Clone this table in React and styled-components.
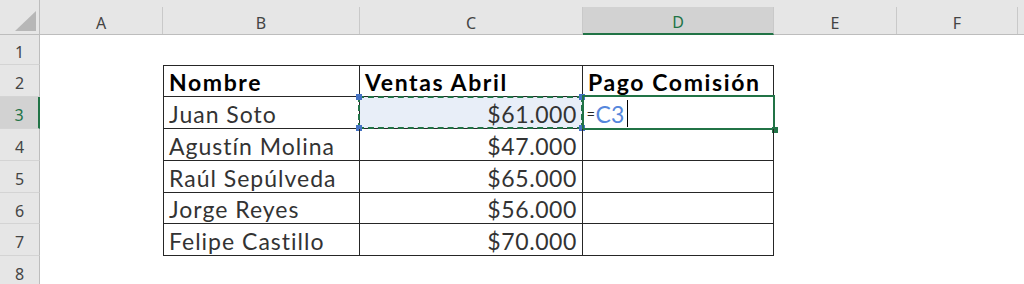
import React from 'react';
import styled, { createGlobalStyle, css } from 'styled-components';

const GlobalStyle = createGlobalStyle`
  html, body {
    margin: 0;
    padding: 0;
    background: #ffffff;
  }
  body {
    overflow: hidden;
  }
`;

const COLS = ['A', 'B', 'C', 'D', 'E', 'F'];
const WIDTHS = [123, 197, 223, 191, 123, 121];
const ROW_HEIGHTS = [30, 32, 32, 32, 32, 31, 32, 32, 32];

const data = [
  ['Juan Soto', '$61.000'],
  ['Agustín Molina', '$47.000'],
  ['Raúl Sepúlveda', '$65.000'],
  ['Jorge Reyes', '$56.000'],
  ['Felipe Castillo', '$70.000'],
];

const Sheet = styled.div`
  width: 1024px;
  height: 284px;
  overflow: hidden;
  display: grid;
  grid-template-columns: 40px ${WIDTHS.map((w) => `${w}px`).join(' ')} 1fr;
  grid-template-rows: 35px ${ROW_HEIGHTS.map((h) => `${h}px`).join(' ')};
  background: #ffffff;
`;

const Corner = styled.div`
  position: relative;
  background: #e6e6e6;
  border-right: 1px solid #bdbdbd;
  border-bottom: 1px solid #bdbdbd;
  box-sizing: border-box;

  &::after {
    content: '';
    position: absolute;
    right: 3px;
    bottom: 3px;
    width: 0;
    height: 0;
    border-left: 21px solid transparent;
    border-bottom: 20px solid #b7b7b7;
  }
`;

const ColHead = styled.div`
  display: flex;
  flex-direction: column;
  background: #e6e6e6;
  box-sizing: border-box;
  border-bottom: 1px solid #bdbdbd;
  font-family: 'Noto Sans', 'Open Sans', sans-serif;
  font-size: 16px;
  color: #444444;
`;

const ColLabel = styled.div`
  flex: 1;
  margin-top: 7px;
  padding-top: 4px;
  display: flex;
  align-items: center;
  justify-content: center;
  border-right: 1px solid #c9c9c9;
  ${({ $active }) =>
    $active &&
    css`
      background: #d2d2d2;
      color: #217346;
      border-bottom: 2px solid #217346;
      margin-bottom: -1px;
    `}
`;

const RowHead = styled.div`
  display: flex;
  align-items: center;
  justify-content: center;
  box-sizing: border-box;
  background: ${({ $active }) => ($active ? '#d2d2d2' : '#e6e6e6')};
  color: ${({ $active }) => ($active ? '#217346' : '#444444')};
  border-bottom: 1px solid #d4d4d4;
  border-right: ${({ $active }) => ($active ? '2px solid #217346' : '1px solid #bdbdbd')};
  font-family: 'Noto Sans', 'Open Sans', sans-serif;
  font-size: 16px;
  padding-top: 5px;
`;

const Cell = styled.div`
  position: relative;
  display: flex;
  align-items: center;
  justify-content: ${({ $right }) => ($right ? 'flex-end' : 'flex-start')};
  box-sizing: border-box;
  padding: 2px 5px 0 5px;
  font-family: 'Lato', 'Open Sans', sans-serif;
  font-size: 23px;
  font-weight: ${({ $bold }) => ($bold ? 700 : 400)};
  letter-spacing: ${({ $bold, $right }) => ($bold ? '1.6px' : $right ? '0.6px' : '1px')};
  color: ${({ $bold }) => ($bold ? '#000000' : '#333333')};
  white-space: nowrap;
  background: ${({ $tint }) => ($tint ? '#e8eef8' : 'transparent')};
  ${({ $boxed }) =>
    $boxed &&
    css`
      border-right: 1px solid #262626;
      border-bottom: 1px solid #262626;
    `}
  ${({ $first }) =>
    $first &&
    css`
      border-left: 1px solid #262626;
    `}
  ${({ $top }) =>
    $top &&
    css`
      border-top: 1px solid #262626;
    `}
`;

const CopyMarquee = styled.div`
  position: absolute;
  inset: -1px -1px -1px -2px;
  border: 2px dashed #217346;
  pointer-events: none;
`;

const Handle = styled.span`
  position: absolute;
  width: 6px;
  height: 6px;
  background: ${({ $green }) => ($green ? '#217346' : '#4472c4')};
  ${({ $pos }) => $pos}
`;

const ActiveFrame = styled.div`
  position: absolute;
  inset: -2px -2px -2px -1px;
  border: 2px solid #217346;
  pointer-events: none;
`;

const Formula = styled.span`
  display: flex;
  align-items: center;
  margin-left: -1px;
  letter-spacing: 0;
`;

const Eq = styled.span`
  font-family: 'Liberation Sans', sans-serif;
  font-size: 13px;
  color: #262626;
  margin-right: 1px;
`;

const Ref = styled.span`
  color: #5687dc;
`;

const Caret = styled.span`
  display: inline-block;
  width: 1px;
  height: 27px;
  background: #000000;
  margin-left: 3px;
`;

function Corners() {
  return (
    <>
      <Handle $pos="left:-4px;top:-4px;" />
      <Handle $pos="left:-4px;bottom:-4px;" />
      <Handle $pos="right:-4px;top:-4px;" />
      <Handle $pos="right:-4px;bottom:-4px;" />
    </>
  );
}

export default function App() {
  const rows = [];
  for (let r = 1; r <= 9; r++) {
    const active = r === 3;
    rows.push(
      <RowHead key={`rh${r}`} $active={active}>
        {r}
      </RowHead>
    );
    COLS.forEach((c, ci) => {
      const inTable = r >= 2 && r <= 7 && ci >= 1 && ci <= 3;
      let content = null;
      let props = {};
      if (inTable) {
        props = { $boxed: true, $first: ci === 1, $top: r === 2 };
        if (r === 2) {
          props.$bold = true;
          content = ['Nombre', 'Ventas Abril', 'Pago Comisión'][ci - 1];
        } else if (ci === 1) {
          content = data[r - 3][0];
        } else if (ci === 2) {
          props.$right = true;
          content = data[r - 3][1];
        }
      }
      if (r === 3 && ci === 2) {
        props.$tint = true;
        content = (
          <>
            {content}
            <CopyMarquee>
              <Corners />
            </CopyMarquee>
          </>
        );
      }
      if (r === 3 && ci === 3) {
        content = (
          <>
            <Formula>
              <Eq>=</Eq>
              <Ref>C3</Ref>
              <Caret />
            </Formula>
            <ActiveFrame>
              <Handle $green $pos="right:-5px;bottom:-5px;" />
            </ActiveFrame>
          </>
        );
      }
      rows.push(
        <Cell key={`${c}${r}`} {...props}>
          {content}
        </Cell>
      );
    });
    rows.push(<Cell key={`rest${r}`} />);
  }

  return (
    <>
      <GlobalStyle />
      <Sheet>
        <Corner />
        {COLS.map((c) => (
          <ColHead key={c}>
            <ColLabel $active={c === 'D'}>{c}</ColLabel>
          </ColHead>
        ))}
        <ColHead>
          <ColLabel />
        </ColHead>
        {rows}
      </Sheet>
    </>
  );
}
